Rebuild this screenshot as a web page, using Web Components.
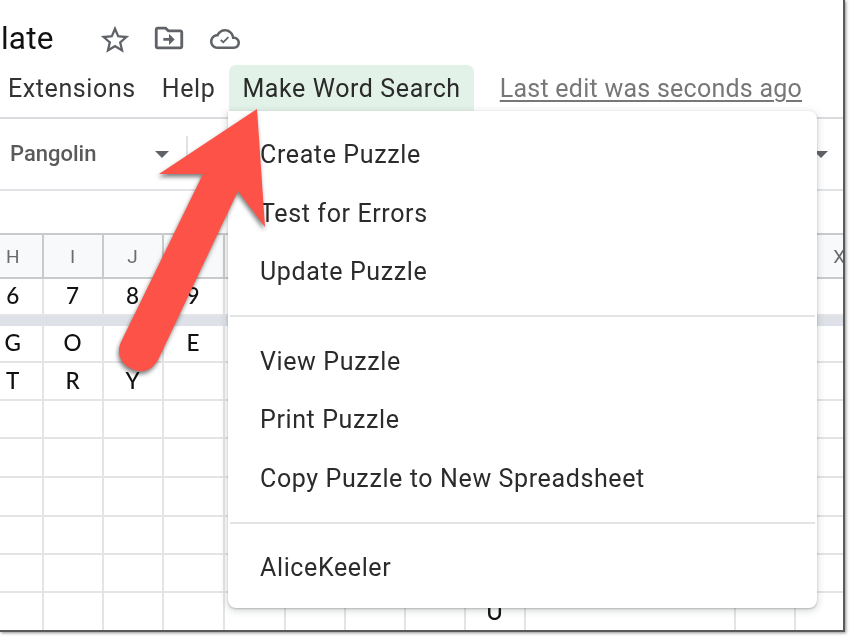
<!DOCTYPE html>
<html><head><meta charset="utf-8">
<style>
html,body{margin:0;padding:0;background:#fff;overflow:hidden}
body{width:850px;height:638px;font-family:Roboto,"Liberation Sans",sans-serif}
x-window{box-shadow:1px 1px 3px rgba(0,0,0,.45)}
</style></head>
<body>
<x-window>
  <x-titlebar></x-titlebar>
  <x-menubar></x-menubar>
  <x-toolbar></x-toolbar>
  <x-formulabar></x-formulabar>
  <x-sheet></x-sheet>
  <x-menu>
    <x-item>Create Puzzle</x-item>
    <x-item>Test for Errors</x-item>
    <x-item>Update Puzzle</x-item>
    <x-sep></x-sep>
    <x-item>View Puzzle</x-item>
    <x-item>Print Puzzle</x-item>
    <x-item>Copy Puzzle to New Spreadsheet</x-item>
    <x-sep></x-sep>
    <x-item>AliceKeeler</x-item>
  </x-menu>
  <x-arrow></x-arrow>
</x-window>
<script>
function def(name, css, html){
  customElements.define(name, class extends HTMLElement{
    constructor(){super();this.attachShadow({mode:'open'}).innerHTML='<style>'+css+'</style>'+html;}
  });
}
def('x-window',`:host{display:flex;flex-direction:column;position:relative;box-sizing:border-box;width:845px;height:632px;overflow:hidden;background:#fff;border-right:2px solid #5a5a5a;border-bottom:2px solid #5a5a5a;filter:blur(.35px)}`,`<slot></slot>`);

def('x-titlebar',`:host{display:flex;align-items:flex-start;height:65px;flex:none;box-sizing:border-box}
.t{font:400 31.5px/36px Roboto,sans-serif;color:#111;margin:21px 0 0 1px;width:54px;letter-spacing:.2px}
svg{fill:#5f6368;flex:none;display:block}
.s{width:34px;height:34px;margin:23px 0 0 43px}
.f{width:34px;height:34px;margin:21px 0 0 20px}
.c{width:30px;height:30px;margin:24px 0 0 24px}`,
`<span class="t">late</span>
<svg class="s" viewBox="0 0 24 24"><path d="M22 9.24l-7.19-.62L12 2 9.19 8.63 2 9.24l5.46 4.73L5.82 21 12 17.27 18.18 21l-1.63-7.03L22 9.24zM12 15.4l-3.76 2.27 1-4.28-3.32-2.88 4.38-.38L12 6.1l1.71 4.04 4.38.38-3.32 2.88 1 4.28L12 15.4z"/></svg>
<svg class="f" viewBox="0 0 24 24"><path d="M20 6h-8l-2-2H4c-1.1 0-1.99.9-1.99 2L2 18c0 1.1.9 2 2 2h16c1.1 0 2-.9 2-2V8c0-1.1-.9-2-2-2zm0 12H4V6h5.17l2 2H20v10zm-8-4H8v-2h4V9l4 4-4 4v-3z"/></svg>
<svg class="c" viewBox="0 0 24 24"><path d="M19.35 10.04C18.67 6.59 15.64 4 12 4 9.11 4 6.6 5.64 5.35 8.04 2.34 8.36 0 10.91 0 14c0 3.31 2.69 6 6 6h13c2.76 0 5-2.24 5-5 0-2.64-2.05-4.78-4.65-4.96zM19 18H6c-2.21 0-4-1.79-4-4 0-2.05 1.53-3.76 3.56-3.97l1.07-.11.5-.95C8.08 7.14 9.94 6 12 6c2.62 0 4.88 1.86 5.39 4.43l.3 1.5 1.53.11c1.56.1 2.78 1.41 2.78 2.96 0 1.65-1.35 3-3 3z"/><path d="M10.6 15.6l-2.5-2.5 1-1 1.5 1.5 3.6-3.6 1 1z"/></svg>`);

def('x-menubar',`:host{display:flex;align-items:flex-start;height:54px;flex:none;box-sizing:border-box;border-bottom:2px solid #dadce0;font:400 25px/30px Roboto,sans-serif;color:#333;letter-spacing:.6px}
span{display:block;margin-top:9px}
.e{margin-left:8px}.h{margin-left:26px}
.m{margin:0 0 0 14px;padding:9px 13px 0;height:47px;box-sizing:border-box;background:#e3f2e9;border-radius:7px 7px 0 0;color:#2a2a2a}
.l{margin-left:26px;color:#777;letter-spacing:.25px;text-decoration:underline;text-underline-offset:3px;text-decoration-thickness:2px}`,
`<span class="e">Extensions</span><span class="h">Help</span><span class="m">Make Word Search</span><span class="l">Last edit was seconds ago</span>`);

def('x-toolbar',`:host{display:flex;align-items:center;height:72px;flex:none;box-sizing:border-box;border-bottom:2px solid #e1e3e6;font:500 22px/26px Roboto,sans-serif;color:#5a5a5a;padding-left:10px}
.p{width:145px}
.c{width:0;height:0;border:7.5px solid transparent;border-top:7.5px solid #5f6368;border-bottom:0;flex:none}
.d{width:2px;height:36px;background:#dfe1e4;margin-left:17px;flex:none}
.r{margin-left:auto;margin-right:15px}`,
`<span class="p">Pangolin</span><span class="c"></span><span class="d"></span><span class="c r"></span>`);

def('x-formulabar',`:host{display:block;height:43px;flex:none;}`,``);

customElements.define('x-sheet',class extends HTMLElement{
  constructor(){super();
    const cols=[43.5,60,60,61,61,60,60,60,60,210,60,49.5];
    const rows=[44,37,10,37,38,38,39,39,38,38,40];
    const cells={ '0,0':'H','0,1':'I','0,2':'J','0,3':'K','0,11':'X',
      '1,0':'6','1,1':'7','1,2':'8','1,3':'9',
      '3,0':'G','3,1':'O','3,3':'E',
      '4,0':'T','4,1':'R','4,2':'Y','10,8':'U'};
    let h='';
    rows.forEach((_,r)=>{
      if(r===2){h+='<div class="band"></div>';return;}
      cols.forEach((_,c)=>{
        const cls=['c'];
        if(r===0)cls.push('hd');
        if(c===0)cls.push('first');
        if(c===11)cls.push('last');
        h+=`<div class="${cls.join(' ')}">${cells[r+','+c]||''}</div>`;
      });
    });
    this.attachShadow({mode:'open'}).innerHTML=`<style>
:host{display:grid;flex:none;border-top:2px solid #c9cacb;margin-top:-1px;
 grid-template-columns:${cols.map(x=>x+'px').join(' ')};grid-template-rows:${rows.map(x=>x+'px').join(' ')};}
.c{box-sizing:border-box;display:flex;align-items:center;justify-content:center;border-right:2px solid #e3e4e5;border-bottom:2px solid #e3e4e5;font:500 22.5px/1 Lato,"Noto Sans",sans-serif;color:#111;background:#fff}
.first{padding-right:16px}
.hd{background:#f8f9fa;border-right-color:#c9cacb;border-bottom-color:#c9cacb;color:#6a6d70;font:400 19px/1 Roboto,sans-serif}
.last{border-right:0;padding-left:38px}
.band{grid-column:1/-1;background:#dfe1e8}
</style>${h}`;
  }
});

def('x-menu',`:host{display:block;position:absolute;left:228px;top:111px;width:589px;height:497px;box-sizing:border-box;padding-top:14px;background:#fff;border-radius:0 8px 8px 8px;box-shadow:0 2px 6px 2px rgba(60,64,67,.15),0 1px 2px rgba(60,64,67,.3);z-index:2}`,`<slot></slot>`);
def('x-item',`:host{display:block;height:58.5px;padding-left:32px;font:400 25px/60.5px Roboto,sans-serif;color:#2b2b2b;letter-spacing:.62px;white-space:nowrap}`,`<slot></slot>`);
def('x-sep',`:host{display:block;height:2px;margin:14.5px 2px 14.5px 2px;background:#e3e4e5}`,``);
def('x-arrow',`:host{display:block;position:absolute;left:0;top:0;width:845px;height:632px;z-index:3;pointer-events:none}
svg{display:block;filter:drop-shadow(-1px 3px 2px rgba(0,0,0,.5))}`,
`<svg width="845" height="632" viewBox="0 0 845 632"><path fill="#fc5248" d="M257 109 L159 174 L203 174 L122 340 C115 353 121 364 132 369 C143 374 152 370 158 360 L238 191 L265 227 Z"/></svg>`);
</script>
</body></html>
